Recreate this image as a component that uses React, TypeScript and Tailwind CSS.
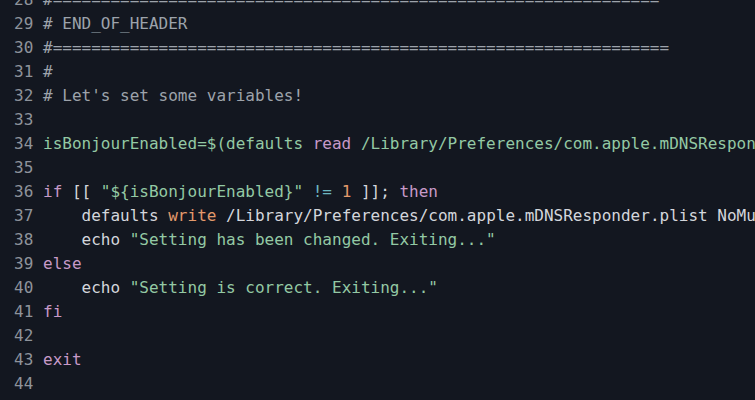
type Tok = [string, string]

const C = {
  txt: 'text-[#d3d6dc]',
  cm: 'text-[#9da3ab]',
  kw: 'text-[#c79ac8]',
  str: 'text-[#93c9a4]',
  num: 'text-[#e39a6c]',
  op: 'text-[#6cb6c0]',
}

const lines: { n: number; toks: Tok[] }[] = [
  { n: 28, toks: [[C.cm, '#' + '='.repeat(63)]] },
  { n: 29, toks: [[C.cm, '# END_OF_HEADER']] },
  { n: 30, toks: [[C.cm, '#' + '='.repeat(64)]] },
  { n: 31, toks: [[C.cm, '#']] },
  { n: 32, toks: [[C.cm, "# Let's set some variables!"]] },
  { n: 33, toks: [] },
  {
    n: 34,
    toks: [
      [C.str, 'isBonjourEnabled=$(defaults '],
      [C.kw, 'read'],
      [C.str, ' /Library/Preferences/com.apple.mDNSResponder.plist NoMulticastAdvertisements)'],
    ],
  },
  { n: 35, toks: [] },
  {
    n: 36,
    toks: [
      [C.kw, 'if'],
      [C.txt, ' [[ '],
      [C.str, '"${isBonjourEnabled}"'],
      [C.txt, ' '],
      [C.op, '!='],
      [C.txt, ' '],
      [C.num, '1'],
      [C.txt, ' ]]; '],
      [C.kw, 'then'],
    ],
  },
  {
    n: 37,
    toks: [
      [C.txt, '    defaults '],
      [C.num, 'write'],
      [C.txt, ' /Library/Preferences/com.apple.mDNSResponder.plist NoMulticastAdvertisements -bool true'],
    ],
  },
  {
    n: 38,
    toks: [
      [C.txt, '    echo '],
      [C.str, '"Setting has been changed. Exiting..."'],
    ],
  },
  { n: 39, toks: [[C.kw, 'else']] },
  {
    n: 40,
    toks: [
      [C.txt, '    echo '],
      [C.str, '"Setting is correct. Exiting..."'],
    ],
  },
  { n: 41, toks: [[C.kw, 'fi']] },
  { n: 42, toks: [] },
  { n: 43, toks: [[C.kw, 'exit']] },
  { n: 44, toks: [] },
]

export default function App() {
  return (
    <div className="h-[400px] w-[755px] overflow-hidden bg-[#131720] font-['DejaVu_Sans_Mono',monospace] text-[16px] leading-[24px]">
      <div className="-mt-[12px] pl-[14px]">
        {lines.map((line) => (
          <div key={line.n} className="flex h-[24px] whitespace-pre">
            <span className="w-[29px] shrink-0 text-[#8e939b]">{line.n}</span>
            <span>
              {line.toks.map(([cls, text], i) => (
                <span key={i} className={cls}>
                  {text}
                </span>
              ))}
            </span>
          </div>
        ))}
      </div>
    </div>
  )
}
